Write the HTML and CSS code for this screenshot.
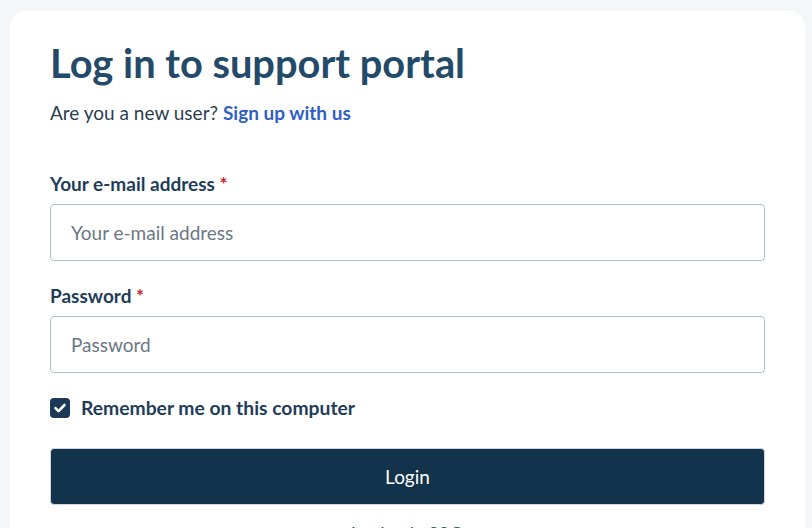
FILE: index.html
```html
<!DOCTYPE html>
<html lang="en">
<head>
<meta charset="utf-8">
<title>Log in to support portal</title>
<link rel="stylesheet" href="styles.css">
</head>
<body>
<main class="card">
  <h1 class="title">Log in to support portal</h1>
  <p class="subtitle">Are you a new user? <a class="signup" href="#">Sign up with us</a></p>
  <form class="form">
    <div class="field">
      <label class="label" for="email">Your e-mail address <span class="req">*</span></label>
      <input class="input" id="email" type="email" placeholder="Your e-mail address">
    </div>
    <div class="field">
      <label class="label" for="pw">Password <span class="req">*</span></label>
      <input class="input" id="pw" type="password" placeholder="Password">
    </div>
    <label class="remember">
      <span class="check"><svg viewBox="0 0 20 20" width="20" height="20"><path d="M5.5 10.2l3 3 6-6.2" fill="none" stroke="#fff" stroke-width="2.6" stroke-linecap="round" stroke-linejoin="round"/></svg></span>
      <span class="remember-text">Remember me on this computer</span>
    </label>
    <button class="btn" type="button">Login</button>
    <p class="alt"><a class="alt-link" href="#">Login via SSO</a></p>
  </form>
</main>
</body>
</html>
```
FILE: styles.css
```css
* { box-sizing: border-box; }
html, body { margin: 0; padding: 0; }
body {
  background: #f5f6f8;
  font-family: "Lato", "Liberation Sans", sans-serif;
  overflow: hidden;
  height: 528px;
}
.card {
  background: #ffffff;
  margin: 11px 7px 0 10px;
  border-radius: 16px;
  padding: 29px 40px 40px 40px;
  min-height: 600px;
}
.title {
  margin: 0;
  font-size: 39.8px;
  line-height: 46px;
  font-weight: 700;
  color: #244a69;
}
.subtitle {
  margin: 14px 0 0 0;
  font-size: 19px;
  line-height: 26px;
  color: #2c3e50;
}
.signup {
  color: #2f5fc4;
  font-weight: 700;
  text-decoration: none;
}
.form { margin-top: 45px; display: flex; flex-direction: column; }
.field { display: flex; flex-direction: column; margin-bottom: 22px; }
.label {
  font-size: 19px;
  line-height: 26px;
  font-weight: 700;
  color: #1f3d5a;
  margin-bottom: 7px;
}
.req { color: #c0282d; }
.input {
  height: 57px;
  border: 1px solid #b3bfcb;
  border-radius: 4px;
  padding: 0 20px;
  font-family: inherit;
  font-size: 19px;
  color: #2c3e50;
  background: #fff;
  outline: none;
}
.input::placeholder { color: #6b7785; }
.remember {
  display: flex;
  align-items: center;
  gap: 11px;
  height: 26px;
}
.check {
  width: 20px;
  height: 20px;
  border-radius: 4px;
  background: #1b3957;
  display: flex;
}
.remember-text {
  font-size: 19.3px;
  line-height: 26px;
  font-weight: 700;
  color: #1f3d5a;
}
.btn {
  margin-top: 27px;
  height: 57px;
  border: 1px solid #cfd6dd;
  border-radius: 4px;
  background: #13334c;
  color: #ffffff;
  font-family: inherit;
  font-size: 19px;
}
.alt {
  margin: 16px 0 0 0;
  text-align: center;
  font-size: 19px;
  line-height: 26px;
}
.alt-link { color: #1d5f6a; text-decoration: none; }
```
